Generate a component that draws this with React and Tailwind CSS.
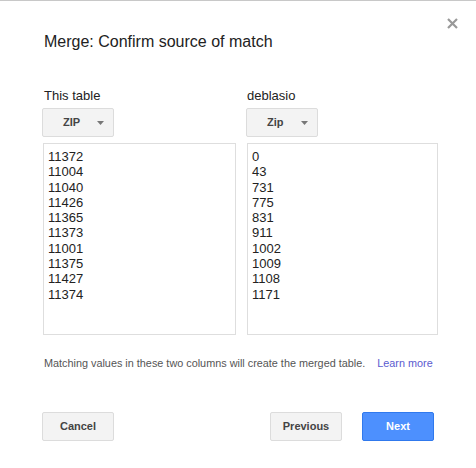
import React from "react";

const left = ["11372","11004","11040","11426","11365","11373","11001","11375","11427","11374"];
const right = ["0","43","731","775","831","911","1002","1009","1108","1171"];

function Select({ label }) {
  return (
    <div className="flex h-[29px] w-[72px] items-center justify-between rounded-[2px] border border-[#dcdcdc] bg-[#f3f3f3] pl-[20px] pr-[9px] text-[11px] font-bold text-[#444]">
      <span>{label}</span>
      <svg width="7" height="4" viewBox="0 0 7 4"><path d="M0 0h7L3.5 4z" fill="#777" /></svg>
    </div>
  );
}

function Btn({ children, primary }) {
  return (
    <div className={
      primary
        ? "flex h-[29px] w-[72px] items-center justify-center rounded-[2px] border border-[#3079ed] bg-[#4d90fe] text-[11px] font-bold text-white"
        : "flex h-[29px] w-[72px] items-center justify-center rounded-[2px] border border-[#dcdcdc] bg-[#f3f3f3] text-[11px] font-bold text-[#444]"
    }>{children}</div>
  );
}

function Column({ title, sel, items, titleClass }) {
  return (
    <div className="flex flex-col">
      <div className={"text-[13px] leading-[16px] text-[#222] " + titleClass}>{title}</div>
      <div className="mt-[4px]"><Select label={sel} /></div>
      <div className="ml-[1px] mt-[6px] h-[192px] border border-[#dedede] pl-[4px] pt-[5px] text-[13px] leading-[15.3px] text-[#222]">
        {items.map((v) => (<div key={v}>{v}</div>))}
      </div>
    </div>
  );
}

export default function App() {
  return (
    <div className="relative h-[468px] w-[476px] border-t border-[#c8c8c8] bg-white pl-[42px] pr-[42px] pt-[31px]" style={{ fontFamily: '"Liberation Sans", Arial, sans-serif' }}>
      <svg className="absolute right-[18px] top-[17px]" width="11" height="11" viewBox="0 0 11 11">
        <path d="M1 1L10 10M10 1L1 10" stroke="#999" strokeWidth="2.2" />
      </svg>
      <div className="pl-[2px] text-[16px] leading-[19px] text-[#222]">Merge: Confirm source of match</div>
      <div className="mt-[37px] grid grid-cols-[194px_192px] gap-x-[10px]">
        <Column title="This table" titleClass="pl-[2px]" sel="ZIP" items={left} />
        <Column title="deblasio" titleClass="pl-[1px]" sel="Zip" items={right} />
      </div>
      <div className="mt-[21px] flex whitespace-nowrap pl-[2px] text-[10.85px] leading-[14px] text-[#555]">
        <span>Matching values in these two columns will create the merged table.</span>
        <span className="ml-[12px] text-[#5b5bcf]">Learn more</span>
      </div>
      <div className="mt-[42px] flex items-center">
        <Btn>Cancel</Btn>
        <div className="flex-1" />
        <Btn>Previous</Btn>
        <div className="w-[20px]" />
        <Btn primary>Next</Btn>
      </div>
    </div>
  );
}
